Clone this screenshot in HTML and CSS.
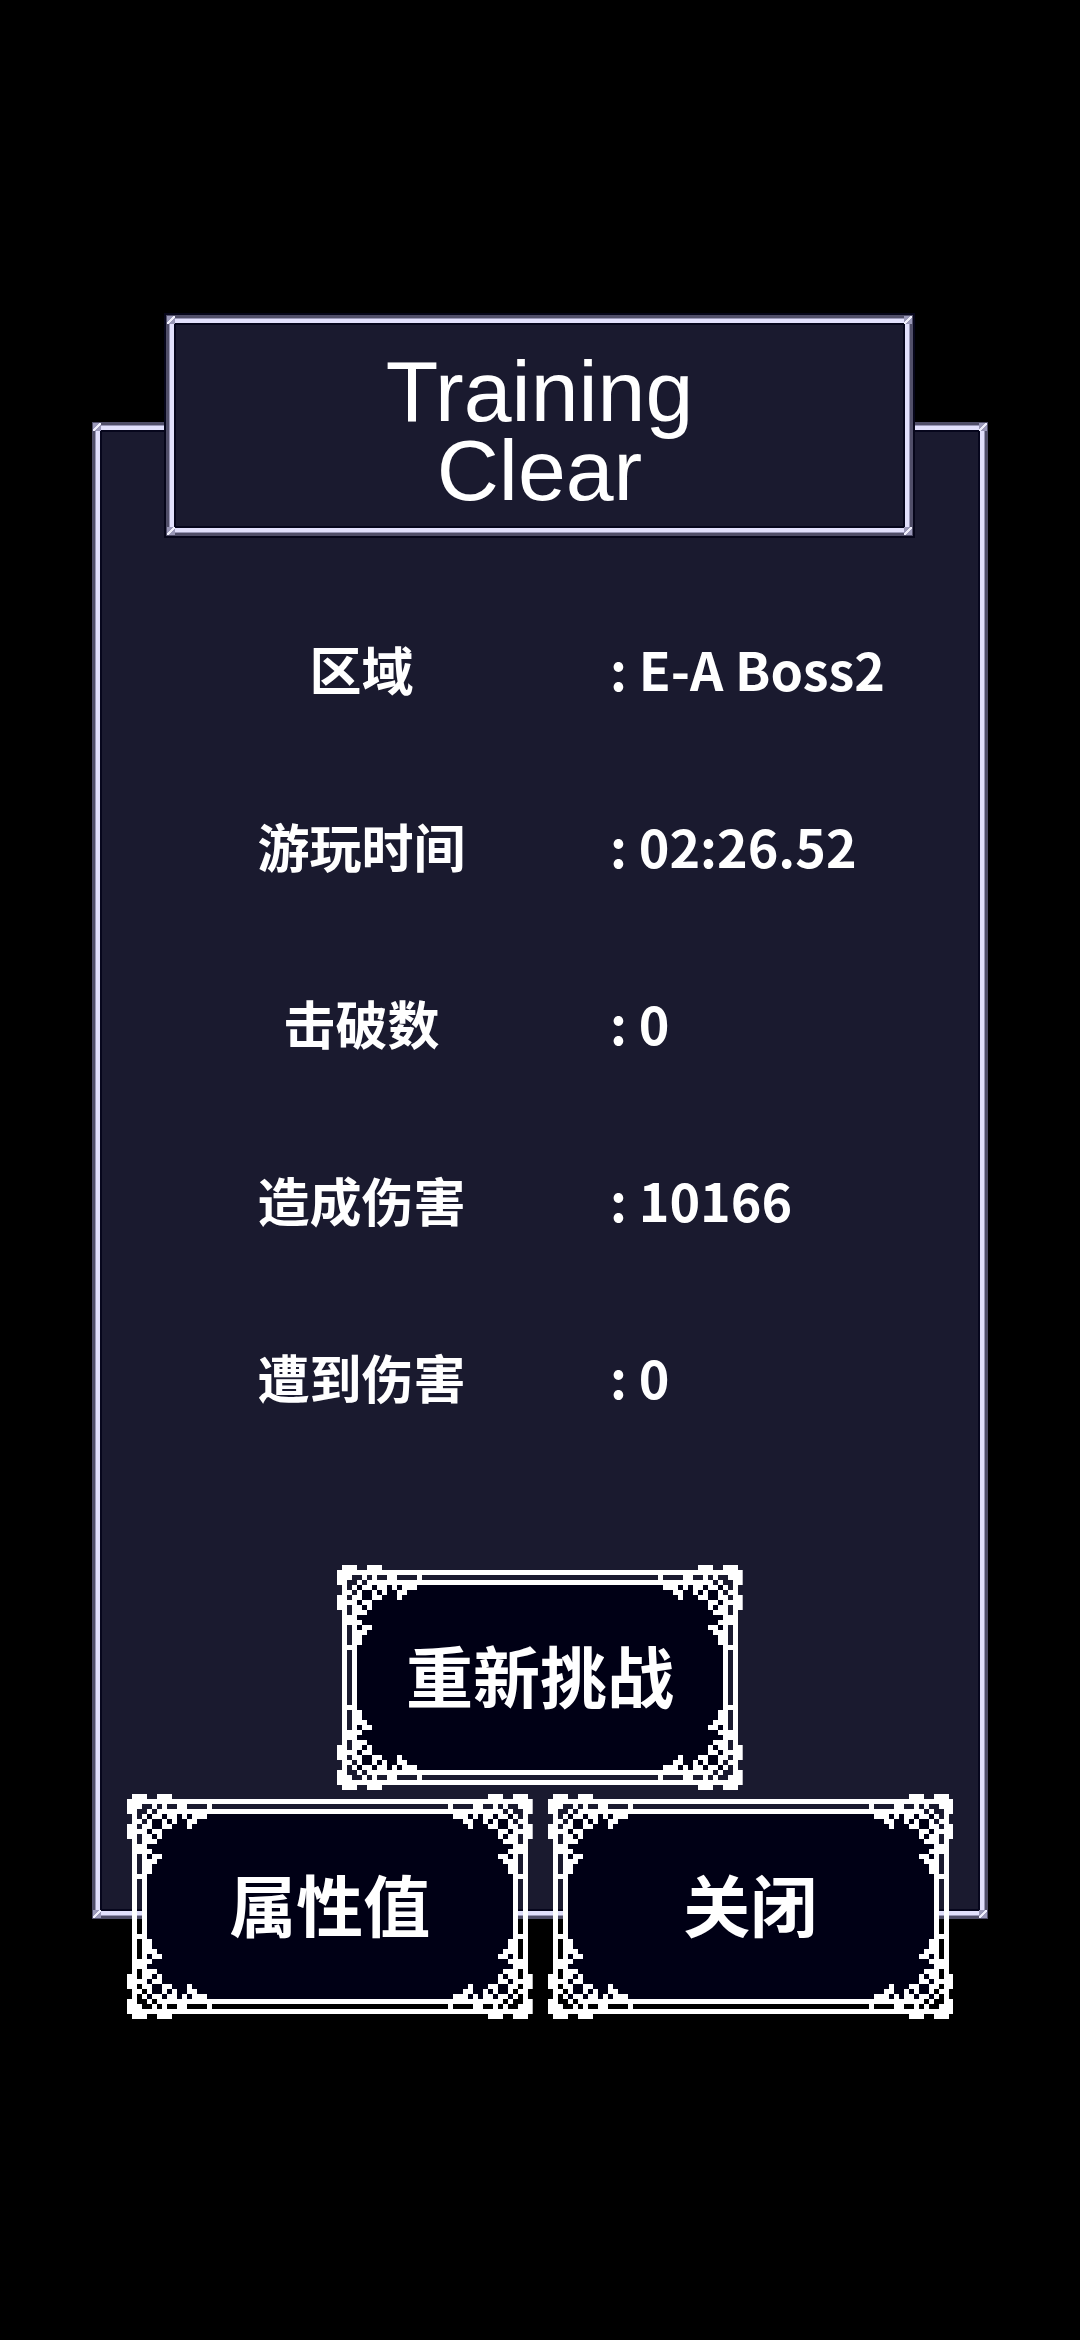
FILE: index.html
```html
<!DOCTYPE html>
<html lang="zh-CN">
<head>
<meta charset="utf-8">
<meta name="viewport" content="width=device-width, initial-scale=1">
<title>Training Clear</title>
<link rel="stylesheet" href="styles.css">
</head>
<body>
<svg class="defs" aria-hidden="true">
  <defs>
    <!-- one ornamental corner on a pixel grid, each run is one row high -->
    <path id="corner" d="M1 0h3v1h-3zM6 0h3v1h-3zM0 1h17v1h-17zM0 2h3v1h-3zM5 2h1v1h-1zM7 2h1v1h-1zM10 2h2v1h-2zM16 2h1v1h-1zM0 3h2v1h-2zM4 3h1v1h-1zM6 3h11v1h-11zM1 4h1v1h-1zM3 4h1v1h-1zM5 4h2v1h-2zM8 4h2v1h-2zM11 4h1v1h-1zM13 4h3v1h-3zM1 5h2v1h-2zM4 5h1v1h-1zM7 5h1v1h-1zM9 5h1v1h-1zM12 5h2v1h-2zM0 6h2v1h-2zM3 6h2v1h-2zM7 6h2v1h-2zM12 6h1v1h-1zM0 7h4v1h-4zM5 7h2v1h-2zM0 8h2v1h-2zM3 8h2v1h-2zM6 8h1v1h-1zM1 9h1v1h-1zM3 9h3v1h-3zM1 10h3v1h-3zM1 11h4v1h-4zM1 12h1v1h-1zM3 12h1v1h-1zM5 12h2v1h-2zM1 13h1v1h-1zM3 13h3v1h-3zM1 14h1v1h-1zM3 14h2v1h-2zM1 15h1v1h-1zM3 15h2v1h-2zM1 16h3v1h-3z"/>
    <symbol id="frame" viewBox="0 0 81 45">
      <rect x="4" y="4" width="73" height="37" fill="#000015"/>
      <g fill="#fff">
        <path d="M17 1h47v1h-47zM17 3h47v1h-47zM17 41h47v1h-47zM17 43h47v1h-47zM1 17h1v11h-1zM3 17h1v11h-1zM77 17h1v11h-1zM79 17h1v11h-1z"/>
        <use href="#corner"/>
        <use href="#corner" transform="translate(81 0) scale(-1 1)"/>
        <use href="#corner" transform="translate(0 45) scale(1 -1)"/>
        <use href="#corner" transform="translate(81 45) scale(-1 -1)"/>
      </g>
    </symbol>
  </defs>
</svg>

<main class="panel">
  <i class="stud tl"></i><i class="stud tr"></i><i class="stud bl"></i><i class="stud br"></i>
  <header class="banner">
    <i class="stud tl"></i><i class="stud tr"></i><i class="stud bl"></i><i class="stud br"></i>
    <h1 class="title">Training<br>Clear</h1>
  </header>

  <dl class="stats">
    <dt>区域</dt><dd>: E-A Boss2</dd>
    <dt>游玩时间</dt><dd>: 02:26.52</dd>
    <dt>击破数</dt><dd>: 0</dd>
    <dt>造成伤害</dt><dd>: 10166</dd>
    <dt>遭到伤害</dt><dd>: 0</dd>
  </dl>

  <div class="actions">
    <button class="btn btn-main" type="button"><svg class="frame" aria-hidden="true"><use href="#frame"/></svg><span class="label">重新挑战</span></button>
    <button class="btn" type="button"><svg class="frame" aria-hidden="true"><use href="#frame"/></svg><span class="label">属性值</span></button>
    <button class="btn" type="button"><svg class="frame" aria-hidden="true"><use href="#frame"/></svg><span class="label">关闭</span></button>
  </div>
</main>
</body>
</html>
```
FILE: styles.css
```css
* {
  box-sizing: border-box;
}

html {
  background: #000;
}

body {
  min-height: 100vh;
  margin: 0;
  padding: 422px 0 120px;
  color: #fff;
  font-family: "Noto Sans CJK SC", "Noto Sans", sans-serif;
}

.defs {
  position: absolute;
  width: 0;
  height: 0;
}

.panel,
.banner {
  position: relative;
  background: #1a1a2f;
  border: 3px solid #504e68;
  box-shadow: inset 0 0 0 1px #9a98b8, inset 0 0 0 5px #e2e0fc, inset 0 0 0 7px #06061c;
}

.panel {
  width: 83%;
  margin: 0 auto;
}

.banner {
  display: flow-root;
  margin: -110px 72px 0 71px;
  padding: 34px 0 23px;
  outline: 2px solid #06061a;
}

.stud {
  position: absolute;
  width: 8px;
  height: 8px;
  background: linear-gradient(135deg, #9a98b8 40%, #f0effc 40% 60%, #9a98b8 60%);
}

.tl { top: -2px; left: -2px; }
.tr { top: -2px; right: -2px; }
.bl { bottom: -2px; left: -2px; }
.br { bottom: -2px; right: -2px; }

.title {
  margin: 0;
  font: 400 86px/79px "Liberation Sans", sans-serif;
  text-align: center;
}

.stats {
  display: grid;
  grid-template-columns: 57% 1fr;
  grid-auto-rows: 177px;
  align-items: center;
  margin: 44px 0 100px;
  padding-left: 18px;
  font-size: 52px;
  font-weight: 700;
  line-height: 76px;
}

.stats dt {
  text-align: center;
}

.stats dd {
  margin: 0;
  white-space: nowrap;
}

.actions {
  position: relative;
  display: grid;
  grid-template-columns: 1fr 1fr;
  gap: 4px 15px;
  margin: 0 32px -104px;
}

.btn {
  position: relative;
  aspect-ratio: 81 / 45;
  padding: 0 0 8px;
  border: 0;
  background: none;
  color: inherit;
  font: 700 67px/96px "Noto Sans CJK SC", sans-serif;
  cursor: pointer;
}

.btn-main {
  grid-column: 1 / -1;
  justify-self: center;
  width: calc((100% - 15px) / 2);
}

.frame {
  position: absolute;
  inset: 0;
  width: 100%;
  height: 100%;
  shape-rendering: crispEdges;
}

.label {
  position: relative;
}
```
